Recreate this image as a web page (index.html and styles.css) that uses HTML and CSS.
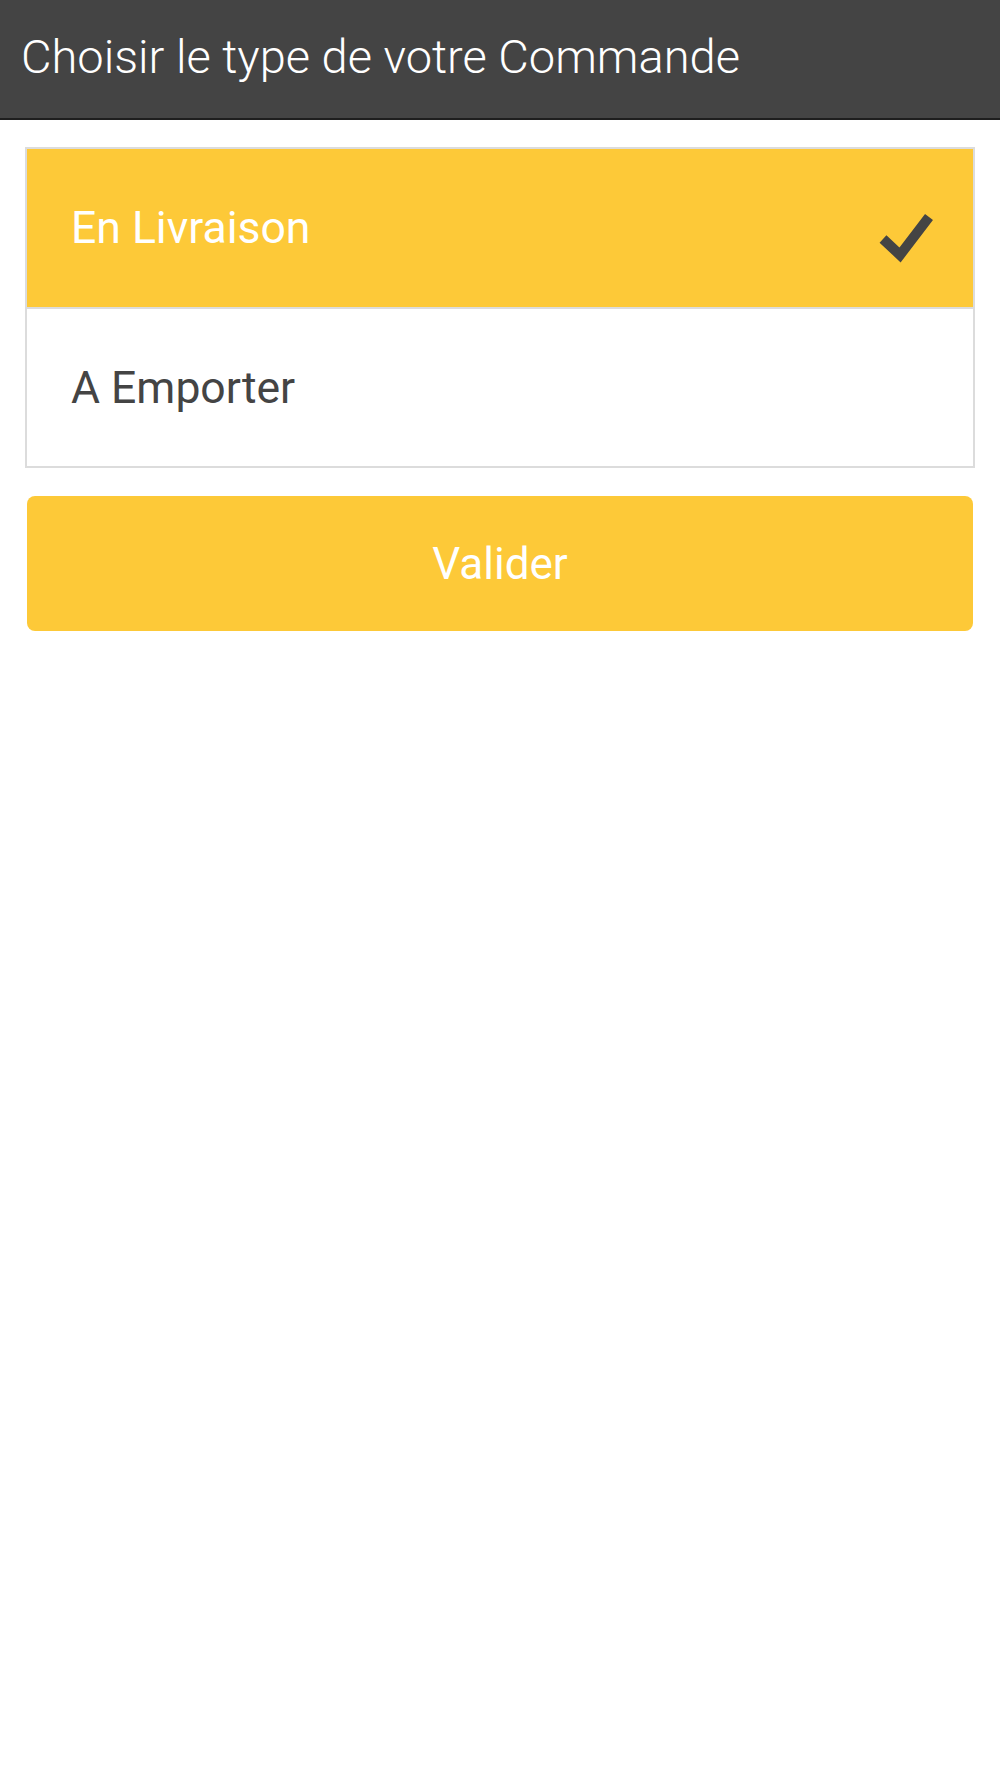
FILE: index.html
```html
<!DOCTYPE html>
<html lang="fr">

<head>
    <meta charset="UTF-8">
    <meta name="viewport" content="width=device-width, initial-scale=1.0">
    <title>Type de Commande</title>
    <link rel="stylesheet" href="styles.css">
</head>

<body>
    <div class="toolbar">
        <h1>Choisir le type de votre Commande</h1>
    </div>

    <div class="content">
        <ul class="choices">
            <li class="choice selected">
                <span>En Livraison</span>
                <svg class="check" width="60" height="60" viewBox="0 0 60 60">
                    <polyline points="8,36 25,52 54,14" fill="none" stroke="#444" stroke-width="10" />
                </svg>
            </li>
            <li class="choice">
                <span>A Emporter</span>
            </li>
        </ul>

        <button type="button" class="validate">Valider</button>
    </div>
</body>
</html>
```

FILE: styles.css
```css
body {
    font-family: 'Roboto', 'Liberation Sans', sans-serif;
    margin: 0;
    padding: 0;
    background-color: #fff;
}

.toolbar {
    height: 120px;
    box-sizing: border-box;
    background-color: #444;
    border-bottom: 2px solid #1e1e1e;
    display: flex;
    align-items: center;
    padding: 0 0 6px 21px;
}

.toolbar h1 {
    margin: 0;
    font-size: 47px;
    font-weight: 300;
    color: #fff;
}

.content {
    padding: 27px 25px 0;
}

.choices {
    list-style: none;
    margin: 0;
    padding: 0;
    border: 2px solid #dcdcdc;
}

.choice {
    height: 158px;
    display: flex;
    align-items: center;
    justify-content: space-between;
    padding: 0 38px 0 44px;
    font-size: 44.5px;
    color: #444;
}

.choice + .choice {
    border-top: 2px solid #dcdcdc;
    height: 157px;
}

.choice.selected {
    background-color: #fdc938;
    color: #fff;
}

.check {
    margin-top: 10px;
}

.validate {
    display: block;
    width: calc(100% - 4px);
    height: 135px;
    margin: 28px 2px 0;
    background-color: #fdc938;
    color: #fff;
    border: none;
    border-radius: 8px;
    font-family: inherit;
    font-size: 44px;
    cursor: pointer;
}
```
